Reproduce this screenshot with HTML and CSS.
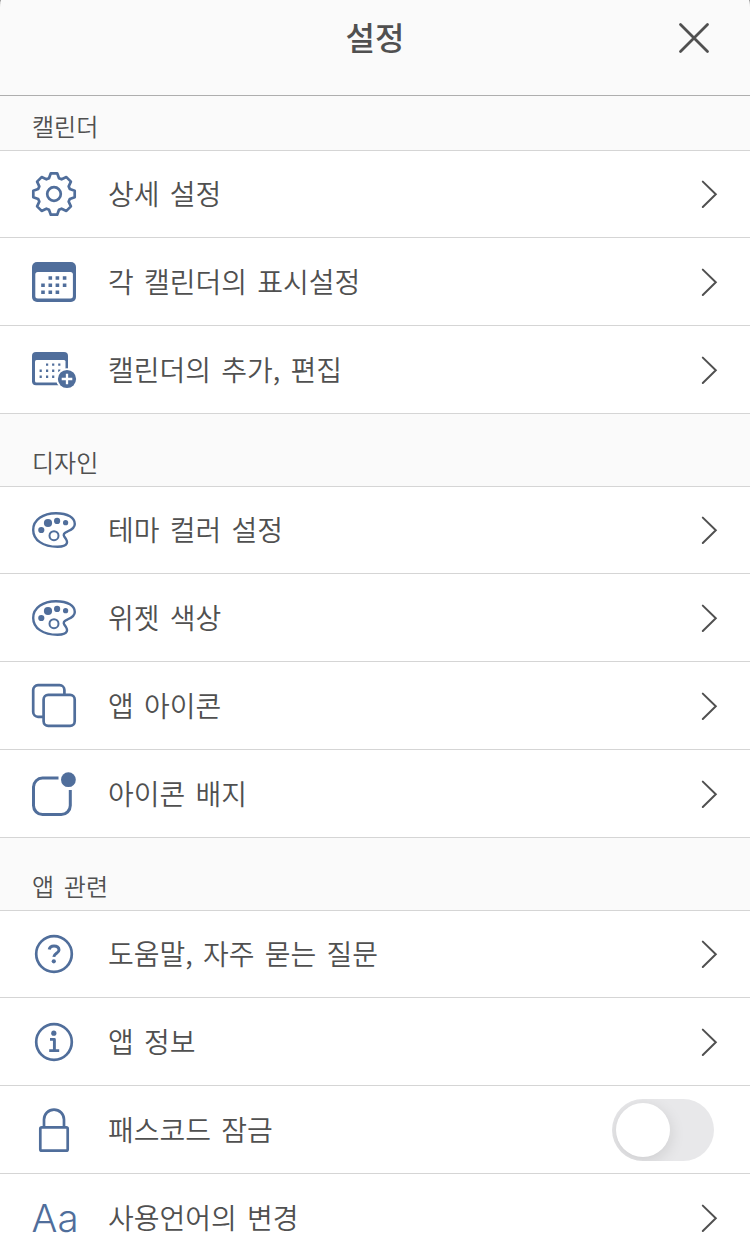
FILE: index.html
```html
<!DOCTYPE html>
<html lang="ko">
<head>
<meta charset="utf-8">
<title>설정</title>
<link rel="stylesheet" href="styles.css">
</head>
<body>
<svg class="defs" width="0" height="0" aria-hidden="true">
  <symbol id="chevron" viewBox="0 0 18 30"><path d="M2.8 2.6 15.8 15.3 2.8 28" fill="none" stroke="#505050" stroke-width="2" stroke-linecap="round"/></symbol>
  <symbol id="palette" viewBox="0 0 44 44">
    <path d="M24 5.2C36 5.2 42.8 10 42.8 16C42.8 20.5 39 22 35.8 23.3C31.6 25 31 26.6 32.4 28.8C34.2 31 35.6 33 34.9 35.2C34 38 30 38.8 25.5 38.8C11 38.8 1.2 32 1.2 21.9C1.2 12 11 5.2 24 5.2Z" fill="none" stroke="#506e9b" stroke-width="2.4"/>
    <g fill="#506e9b"><circle cx="9.3" cy="22" r="3.1"/><circle cx="16" cy="15" r="4.1"/><circle cx="25.1" cy="12.9" r="3.1"/><circle cx="33.6" cy="14.7" r="2.6"/></g>
    <circle cx="22" cy="27.7" r="4.5" fill="none" stroke="#506e9b" stroke-width="2"/>
  </symbol>
</svg>
<div class="sheet">
  <header class="header">
    <h1 class="title">설정</h1>
    <svg class="close" viewBox="0 0 32 32"><path d="M2.5 2.5 29.5 29.5M29.5 2.5 2.5 29.5" fill="none" stroke="#505050" stroke-width="2.8" stroke-linecap="round"/></svg>
  </header>

  <h2 class="section section-first">캘린더</h2>
  <ul class="list">
    <li class="row">
      <svg class="icon line" viewBox="0 0 44 44"><path d="M17 6.2 18.8 1.3H25.2L27 6.2 29.6 7.3 34.4 5.1 38.9 9.6 36.7 14.4 37.8 17 42.7 18.8V25.2L37.8 27 36.7 29.6 38.9 34.4 34.4 38.9 29.6 36.7 27 37.8 25.2 42.7H18.8L17 37.8 14.4 36.7 9.6 38.9 5.1 34.4 7.3 29.6 6.2 27 1.3 25.2V18.8L6.2 17 7.3 14.4 5.1 9.6 9.6 5.1 14.4 7.3Z"/><circle cx="22" cy="22" r="6.8"/></svg>
      <span class="label">상세 설정</span><svg class="chevron"><use href="#chevron"/></svg>
    </li>
    <li class="row">
      <svg class="icon" viewBox="0 0 44 44"><rect y="2" width="44" height="40" rx="5" fill="#506e9b"/><rect x="3.3" y="12" width="37.6" height="26.5" rx="2.5" fill="#fff"/><path d="M16.5 18h3.6m3.5 0h3.6m3.6 0h3.6M9.2 25.3h3.6m3.7 0h3.6m3.5 0h3.6m3.6 0h3.6M9.2 32.3h3.6m3.7 0h3.6m3.5 0h3.6" stroke="#506e9b" stroke-width="3.6"/></svg>
      <span class="label">각 캘린더의 표시설정</span><svg class="chevron"><use href="#chevron"/></svg>
    </li>
    <li class="row">
      <svg class="icon" viewBox="0 0 44 44"><rect y="4" width="36" height="33.3" rx="4" fill="#506e9b"/><rect x="3" y="12" width="30.5" height="22.5" rx="1.5" fill="#fff"/><path d="M14 15.7h2.2m3.9 0h2.2m3.9 0h2.2M7.6 21.8h2.2m4.2 0h2.2m3.9 0h2.2m3.9 0h2.2M7.6 27.9h2.2m4.2 0h2.2m3.9 0h2.2" transform="translate(0 .9)" stroke="#506e9b" stroke-width="2.4"/><circle cx="35" cy="31" r="10.8" fill="#fff"/><circle cx="35" cy="31" r="9.1" fill="#506e9b"/><path d="M35 25.7v10.6M29.7 31h10.6" stroke="#fff" stroke-width="2.3"/></svg>
      <span class="label">캘린더의 추가, 편집</span><svg class="chevron"><use href="#chevron"/></svg>
    </li>
  </ul>

  <h2 class="section">디자인</h2>
  <ul class="list">
    <li class="row"><svg class="icon"><use href="#palette"/></svg><span class="label">테마 컬러 설정</span><svg class="chevron"><use href="#chevron"/></svg></li>
    <li class="row"><svg class="icon"><use href="#palette"/></svg><span class="label">위젯 색상</span><svg class="chevron"><use href="#chevron"/></svg></li>
    <li class="row">
      <svg class="icon line" viewBox="0 0 44 44"><path d="M11 32.8H6A4.8 4.8 0 0 1 1.2 28V6A4.8 4.8 0 0 1 6 1.2H27.6A4.8 4.8 0 0 1 32.4 6V10.5"/><rect x="11.6" y="10.8" width="31.1" height="31" rx="4.6"/></svg>
      <span class="label">앱 아이콘</span><svg class="chevron"><use href="#chevron"/></svg>
    </li>
    <li class="row">
      <svg class="icon" viewBox="0 0 44 44"><path d="M26.5 6.1H10.5A9 9 0 0 0 1.5 15.1V33.5A9 9 0 0 0 10.5 42.5H29.3A9 9 0 0 0 38.3 33.5V18" fill="none" stroke="#506e9b" stroke-width="3"/><circle cx="36.4" cy="7.7" r="7.4" fill="#506e9b"/></svg>
      <span class="label">아이콘 배지</span><svg class="chevron"><use href="#chevron"/></svg>
    </li>
  </ul>

  <h2 class="section">앱 관련</h2>
  <ul class="list">
    <li class="row">
      <svg class="icon line" viewBox="0 0 44 44"><circle cx="22" cy="22" r="17.8"/><path d="M17.2 17.4C17.6 15.2 19.4 13.9 22 13.9C25 13.9 27 15.5 27 17.9C27 21.2 22 21.2 21.8 24.9" stroke-width="3"/><circle class="solid" cx="21.8" cy="29.3" r="2.1"/></svg>
      <span class="label">도움말, 자주 묻는 질문</span><svg class="chevron"><use href="#chevron"/></svg>
    </li>
    <li class="row">
      <svg class="icon line" viewBox="0 0 44 44"><circle cx="22" cy="22" r="17.8"/><circle class="solid" cx="21.8" cy="13.2" r="2.6"/><path d="M18 19.4H22.4V30.6M17.2 30.6H27.2" stroke-width="2.9"/></svg>
      <span class="label">앱 정보</span><svg class="chevron"><use href="#chevron"/></svg>
    </li>
    <li class="row">
      <svg class="icon line" viewBox="0 0 44 44"><rect x="8.3" y="19.3" width="27.4" height="23.4" rx="1.5"/><path d="M12 19V11.6A10 10 0 0 1 32 11.6V19"/></svg>
      <span class="label">패스코드 잠금</span><span class="toggle"></span>
    </li>
    <li class="row">
      <svg class="icon" viewBox="0 0 44 44"><text class="letters" x="-0.5" y="36" textLength="47" lengthAdjust="spacingAndGlyphs">Aa</text></svg>
      <span class="label">사용언어의 변경</span><svg class="chevron"><use href="#chevron"/></svg>
    </li>
  </ul>
</div>
</body>
</html>
```
FILE: styles.css
```css
* { box-sizing: border-box; }
body {
  margin: 0;
  height: 1237px;
  overflow: hidden;
  background: #777;
  color: #505050;
  font-family: "Noto Sans CJK KR", sans-serif;
}
.defs { display: block; height: 0; }
.sheet {
  width: 750px;
  height: 1237px;
  overflow: hidden;
  background: #fafafa;
  border-radius: 1px 1px 0 0 / 8px 8px 0 0;
}
.header {
  display: grid;
  grid-template-columns: 72px 1fr 72px;
  height: 96px;
  padding-top: 12px;
  border-bottom: 1px solid #aeaeae;
}
.title {
  grid-column: 2;
  margin: 0;
  font-size: 32px;
  line-height: 48px;
  font-weight: 500;
  text-align: center;
}
.close { width: 32px; height: 32px; margin-top: 10px; }
.section {
  display: flex;
  align-items: flex-end;
  height: 73px;
  margin: 0;
  padding: 0 32px 6px;
  border-bottom: 1px solid #d5d5d5;
  font-size: 24px;
  line-height: 36px;
  font-weight: 350;
  word-spacing: 3px;
}
.section-first { height: 55px; }
.list { margin: 0; padding: 0; list-style: none; background: #fff; }
.row {
  display: flex;
  height: 88px;
  padding: 22px 32px 0;
  border-bottom: 1px solid #d5d5d5;
}
.row:first-child { height: 87px; padding-top: 21px; }
.icon { flex: none; width: 44px; height: 44px; margin-right: 32px; overflow: visible; }
.line { fill: none; stroke: #506e9b; stroke-width: 2.7; stroke-linejoin: round; }
.solid { fill: #506e9b; stroke: none; }
.letters { font-family: Inter, sans-serif; font-size: 38px; font-weight: 300; fill: #506e9b; }
.label { flex: 1; font-size: 28px; line-height: 42px; font-weight: 350; word-spacing: 2.4px; }
.chevron { flex: none; width: 18px; height: 30px; margin-top: 7px; }
.toggle {
  width: 102px;
  height: 62px;
  margin: -9px 4px 0 0;
  padding: 4px;
  border-radius: 31px;
  overflow: hidden;
  background: #e8e8ea;
}
.toggle::before {
  content: "";
  display: block;
  width: 54px;
  height: 54px;
  border-radius: 50%;
  background: #fff;
  box-shadow: 0 4px 16px rgba(0, 0, 0, .12);
}
```
